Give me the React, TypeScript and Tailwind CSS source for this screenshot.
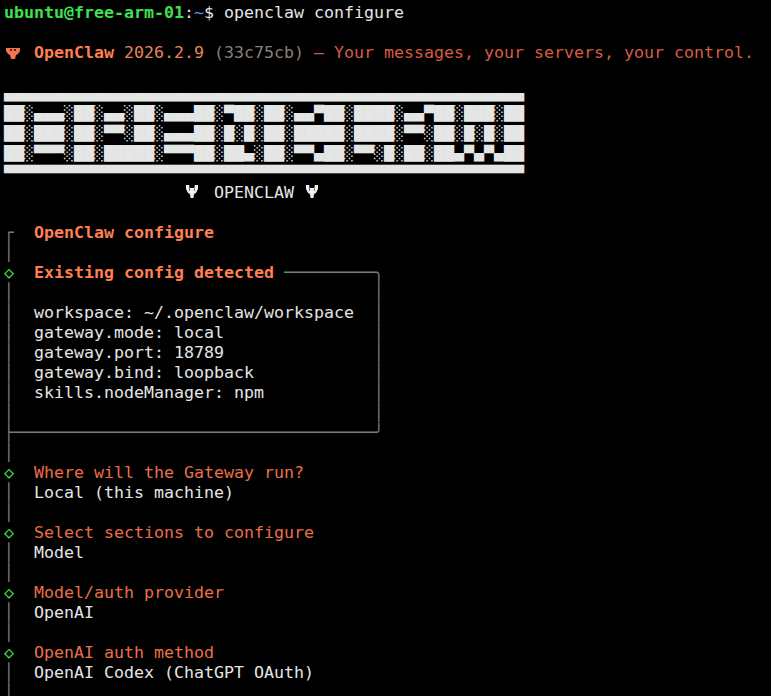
import React from 'react';

const BAR = '│';

// diamond step line with prompt title
const Step = ({ title, value }: { title: string; value: string }) => (
  <>
    <div>
      <span className="text-[#3fe04f]">◇</span>
      {'  '}
      <span className="text-[#ea6f49]">{title}</span>
    </div>
    <div>
      <span className="text-[#7c7c7c]">{BAR}</span>
      {'  '}
      {value}
    </div>
    <div className="text-[#7c7c7c]">{BAR}</div>
  </>
);

const OrangeLobster = () => (
  <svg width="20" height="20" viewBox="0 0 20 20" className="inline-block shrink-0 align-top">
    <path fill="#f0764f" d="M2 5h14v3l-2 3-2 1-1 4H7l-1-4-2-1-2-3z" />
    <rect x="6" y="6" width="2" height="2" fill="#5a2010" />
    <rect x="10" y="6" width="2" height="2" fill="#5a2010" />
  </svg>
);

const WhiteLobster = () => (
  <svg width="20" height="20" viewBox="0 0 20 20" className="inline-block shrink-0 align-top">
    <path fill="#f0f0f0" d="M2 2h3l1 3h4l1-3h3v4l-2 4-2 1-.5 4h-3L6 11l-2-1-2-4z" />
    <rect x="5" y="3" width="1" height="5" fill="#3a6fa8" />
    <rect x="10" y="3" width="1" height="5" fill="#a8703a" />
  </svg>
);

const banner = [
  '▄▄▄▄▄▄▄▄▄▄▄▄▄▄▄▄▄▄▄▄▄▄▄▄▄▄▄▄▄▄▄▄▄▄▄▄▄▄▄▄▄▄▄▄▄▄▄▄▄▄▄▄',
  '██░▄▄▄░██░▄▄░██░▄▄▄██░▀██░██░▄▄▀██░████░▄▄▀██░███░██',
  '██░███░██░▀▀░██░▄▄▄██░█░█░██░█████░████░▀▀░██░█░█░██',
  '██░▀▀▀░██░█████░▀▀▀██░██▄░██░▀▀▄██░▀▀░█░██░██▄▀▄▀▄██',
  '▀▀▀▀▀▀▀▀▀▀▀▀▀▀▀▀▀▀▀▀▀▀▀▀▀▀▀▀▀▀▀▀▀▀▀▀▀▀▀▀▀▀▀▀▀▀▀▀▀▀▀▀',
];

const config = [
  'workspace: ~/.openclaw/workspace',
  'gateway.mode: local',
  'gateway.port: 18789',
  'gateway.bind: loopback',
  'skills.nodeManager: npm',
];

const steps = [
  { title: 'Where will the Gateway run?', value: 'Local (this machine)' },
  { title: 'Select sections to configure', value: 'Model' },
  { title: 'Model/auth provider', value: 'OpenAI' },
  { title: 'OpenAI auth method', value: 'OpenAI Codex (ChatGPT OAuth)' },
];

// one row of the box: left rail, content, right rail at column 37
const BoxRow = ({ text = '' }: { text?: string }) => (
  <div className="flex">
    <span className="text-[#7c7c7c]">{BAR}</span>
    <span className="w-[350px]">{'  ' + text}</span>
    <span className="ml-[10px] text-[#7c7c7c]">{BAR}</span>
  </div>
);

export default function App() {
  return (
    <div className="h-[696px] w-[771px] overflow-hidden whitespace-pre bg-black pl-1 pt-[3px] font-['DejaVu_Sans_Mono',monospace] text-[16.61px] leading-[20px] text-[#e5e5e5]">
      <div>
        <span className="font-bold text-[#3fe04f]">ubuntu@free-arm-01</span>
        <span>:</span>
        <span className="text-[#4aa3e8]">~</span>
        <span>$ openclaw configure</span>
      </div>
      <div>{' '}</div>
      <div className="flex">
        <OrangeLobster />
        <span>
          {' '}
          <span className="font-bold text-[#ff7f50]">OpenClaw</span>
          <span className="text-[#e8845f]"> 2026.2.9</span>
          <span className="text-[#8b7f77]"> (33c75cb)</span>
          <span className="text-[#d65c45]"> — Your messages, your servers, your control.</span>
        </span>
      </div>
      <div>{' '}</div>
      {/* terminal draws the block glyphs shorter than the line, leaving black gaps */}
      {banner.map((row, i) => (
        <div key={i} className="origin-[50%_13.3px] scale-y-[0.85]">
          {row}
        </div>
      ))}
      <div className="flex pl-[180px]">
        <WhiteLobster />
        <span> OPENCLAW </span>
        <WhiteLobster />
      </div>
      <div>{' '}</div>
      <div>
        <span className="text-[#7c7c7c]">┌</span>
        {'  '}
        <span className="font-bold text-[#ff7f50]">OpenClaw configure</span>
      </div>
      <div className="text-[#7c7c7c]">{BAR}</div>
      <div>
        <span className="text-[#3fe04f]">◇</span>
        {'  '}
        <span className="font-bold text-[#ff7f50]">Existing config detected</span>
        <span className="text-[#7c7c7c]"> ─────────╮</span>
      </div>
      <BoxRow />
      {config.map((row) => (
        <BoxRow key={row} text={row} />
      ))}
      <BoxRow />
      <div className="text-[#7c7c7c]">├────────────────────────────────────╯</div>
      <div className="text-[#7c7c7c]">{BAR}</div>
      {steps.map((s) => (
        <Step key={s.title} title={s.title} value={s.value} />
      ))}
    </div>
  );
}
